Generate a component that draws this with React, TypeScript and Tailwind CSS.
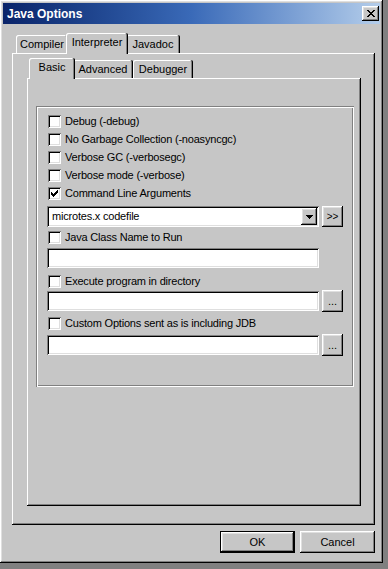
import clsx from "clsx";

const raised =
  "shadow-[inset_-1px_-1px_#000,inset_1px_1px_#fff,inset_-2px_-2px_#808080,inset_2px_2px_#dfdfdf]";
const sunken =
  "shadow-[inset_1px_1px_#808080,inset_-1px_-1px_#fff,inset_2px_2px_#000,inset_-2px_-2px_#dfdfdf]";
const panel =
  "shadow-[inset_-1px_-1px_#000,inset_1px_1px_#fff,inset_-2px_-2px_#808080]";
const etched =
  "shadow-[inset_1px_1px_#808080,inset_-1px_-1px_#fff,inset_2px_2px_#fff,inset_-2px_-2px_#808080]";
const tabEdge =
  "shadow-[inset_-1px_0_#000,inset_1px_1px_#fff,inset_-2px_0_#808080]";

const Checkbox = ({ checked }: { checked?: boolean }) => (
  <span className={clsx("flex h-[13px] w-[13px] shrink-0 bg-white", sunken)}>
    {checked && (
      <svg width="13" height="13" viewBox="0 0 13 13" shapeRendering="crispEdges">
        <path
          d="M3 5h1v3h-1z M4 6h1v3h-1z M5 7h1v3h-1z M6 6h1v3h-1z M7 5h1v3h-1z M8 4h1v3h-1z M9 3h1v3h-1z"
          fill="#000"
        />
      </svg>
    )}
  </span>
);

const CheckRow = ({
  label,
  checked,
  className,
}: {
  label: string;
  checked?: boolean;
  className?: string;
}) => (
  <div className={clsx("flex h-[18px] items-center gap-[4px] pl-[1px]", className)}>
    <Checkbox checked={checked} />
    <span className="whitespace-nowrap tracking-[-0.2px]">{label}</span>
  </div>
);

const Tab = ({
  label,
  w,
  active,
}: {
  label: string;
  w: string;
  active?: boolean;
}) => (
  <div
    className={clsx(
      "flex shrink-0 items-center justify-center rounded-t-[2px] bg-[#c6c6c6]",
      tabEdge,
      w,
      active ? "relative z-10 -mx-[2px] -mb-px h-[21px] pb-[2px]" : "h-[18px]"
    )}
  >
    {label}
  </div>
);

const Button = ({
  children,
  className,
}: {
  children: React.ReactNode;
  className?: string;
}) => (
  <div
    className={clsx(
      "flex shrink-0 items-center justify-center bg-[#c6c6c6]",
      raised,
      className
    )}
  >
    {children}
  </div>
);

const Field = ({ className }: { className?: string }) => (
  <div className={clsx("h-[20px] w-[272px] shrink-0 bg-white", sunken, className)} />
);

export default function App() {
  return (
    <div className="h-[569px] w-[388px] bg-[#808080] font-['Liberation_Sans',Arial,sans-serif] text-[11px] text-black">
      <div className={clsx("flex h-[563px] w-[383px] flex-col bg-[#c6c6c6] px-[3px] pt-[3px]", raised)}>
        {/* Title bar */}
        <div className="flex h-[21px] items-center justify-between bg-gradient-to-r from-[#0a246a] via-[#3a6ab8] to-[#b4cdea] pl-[4px] pr-[1px]">
          <span className="text-[12px] font-bold text-white">Java Options</span>
          <Button className="h-[15px] w-[17px]">
            <svg width="8" height="7" viewBox="0 0 8 7" shapeRendering="crispEdges">
              <path
                d="M0 0h2v1h-2z M6 0h2v1h-2z M1 1h2v1h-2z M5 1h2v1h-2z M2 2h4v1h-4z M3 3h2v1h-2z M2 4h4v1h-4z M1 5h2v1h-2z M5 5h2v1h-2z M0 6h2v1h-2z M6 6h2v1h-2z"
                fill="#000"
              />
            </svg>
          </Button>
        </div>

        {/* Outer tabs */}
        <div className="ml-[9px] mt-[9px] flex h-[20px] w-[363px] items-end pl-[4px]">
          <Tab label="Compiler" w="w-[52px]" />
          <Tab label="Interpreter" w="w-[62px]" active />
          <Tab label="Javadoc" w="w-[54px]" />
        </div>
        <div className={clsx("ml-[9px] flex h-[472px] w-[363px] flex-col pl-[15px] pt-[5px]", panel)}>
          {/* Inner tabs */}
          <div className="flex h-[20px] w-[334px] items-end pl-[4px]">
            <Tab label="Basic" w="w-[46px]" active />
            <Tab label="Advanced" w="w-[60px]" />
            <Tab label="Debugger" w="w-[60px]" />
          </div>
          <div className={clsx("flex h-[428px] w-[334px] flex-col pl-[9px] pt-[28px]", panel)}>
            {/* Group box */}
            <div className={clsx("flex h-[281px] w-[318px] flex-col pl-[11px] pt-[6px]", etched)}>
              <CheckRow label="Debug (-debug)" />
              <CheckRow label="No Garbage Collection (-noasyncgc)" />
              <CheckRow label="Verbose GC (-verbosegc)" />
              <CheckRow label="Verbose mode (-verbose)" />
              <CheckRow label="Command Line Arguments" checked />

              <div className="mt-[4px] flex items-center gap-[3px]">
                <div className={clsx("flex h-[21px] w-[272px] items-center justify-between bg-white pl-[5px] pr-[2px]", sunken)}>
                  <span className="tracking-[-0.2px]">microtes.x codefile</span>
                  <Button className="h-[17px] w-[16px]">
                    <svg width="7" height="4" viewBox="0 0 7 4" shapeRendering="crispEdges">
                      <path d="M0 0h7v1h-7z M1 1h5v1h-5z M2 2h3v1h-3z M3 3h1v1h-1z" fill="#000" />
                    </svg>
                  </Button>
                </div>
                <Button className="h-[21px] w-[21px] pb-[1px] text-[10px]">&gt;&gt;</Button>
              </div>

              <CheckRow label="Java Class Name to Run" className="mt-[1px]" />
              <Field className="mt-[2px]" />

              <CheckRow label="Execute program in directory" className="mt-[4px]" />
              <div className="flex h-[22px] items-center gap-[3px]">
                <Field />
                <Button className="h-[22px] w-[21px] items-end pb-[5px] leading-none">...</Button>
              </div>

              <CheckRow label="Custom Options sent as is including JDB" className="mt-[2px]" />
              <div className="mt-[2px] flex h-[22px] items-center gap-[3px]">
                <Field />
                <Button className="h-[22px] w-[21px] items-end pb-[5px] leading-none">...</Button>
              </div>
            </div>
          </div>
        </div>

        {/* Dialog buttons */}
        <div className="ml-[9px] mt-[6px] flex w-[363px] justify-end gap-[5px]">
          <div className="h-[22px] w-[75px] border border-black">
            <Button className="h-full w-full">OK</Button>
          </div>
          <Button className="h-[22px] w-[75px]">Cancel</Button>
        </div>
      </div>
    </div>
  );
}
